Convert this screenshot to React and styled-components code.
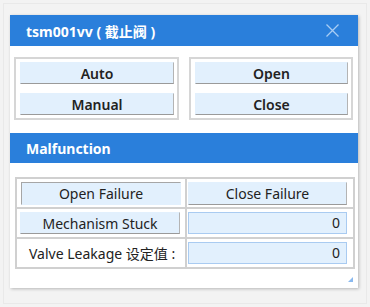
import React from "react"
import styled, { createGlobalStyle } from "styled-components"

const GlobalStyle = createGlobalStyle`
    html, body {
        margin: 0;
        padding: 0;
        background: #f3f3f3;
        font-family: "Noto Sans", "Noto Sans CJK SC", sans-serif;
    }
`

const Frame = styled.div`
    width: 370px;
    height: 307px;
    box-sizing: border-box;
    padding: 15px 12px 0 10px;
    position: relative;
    &:before{
        content: "";
        position: absolute;
        left: 3px;
        top: 3px;
        right: 3px;
        bottom: 3px;
        border: 1px solid #e9e9e9;
        pointer-events: none;
    }
`

const Panel = styled.div`
    position: relative;
    width: 348px;
    height: 273px;
    background: #fff;
    box-shadow: 1px 1px 3px rgba(0, 0, 0, 0.25);
    display: flex;
    flex-direction: column;
`

const Header = styled.div`
    height: ${props => props.h}px;
    background: #2a7fdb;
    color: #fff;
    font-weight: 700;
    font-size: 14px;
    display: flex;
    align-items: center;
    justify-content: space-between;
    padding: 0 19px 0 16px;
    box-sizing: border-box;
    margin-top: ${props => props.top || 0}px;
`

const CloseIcon = styled.svg`
    width: 13px;
    height: 13px;
`

const Groups = styled.div`
    display: flex;
    gap: 10px;
    padding: 11px 5px 0 4px;
`

const GroupBox = styled.div`
    flex: ${props => props.w} 0 0;
    border: 2px solid #d6d6d6;
    padding: 3px 3px 3px 4px;
    display: flex;
    flex-direction: column;
    gap: 9px;
`

const Button = styled.div`
    height: ${props => props.h || 22}px;
    box-sizing: border-box;
    background: #e2f0fd;
    border: 1px solid #e2f0fd;
    ${props => props.inset
        ? "border-top-color: #a6a6a6; border-left-color: #a6a6a6;"
        : "border-bottom-color: #9a9a9a; border-right-color: #b4b4b4;"}
    color: #222;
    font-size: 14px;
    font-weight: ${props => props.strong ? 600 : 400};
    display: flex;
    align-items: center;
    justify-content: center;
    width: ${props => props.width ? props.width + "px" : "auto"};
    margin-left: ${props => props.ml || 0}px;
`

const Table = styled.table`
    margin: 14px 0 0 5px;
    width: 338px;
    border: 1px solid #d0d0d0;
    border-spacing: 0;
    table-layout: fixed;
`

const Cell = styled.td`
    height: 28px;
    padding: 0;
    border: 1px solid #d0d0d0;
    vertical-align: middle;
    width: ${props => props.w}px;
`

const Label = styled.div`
    font-size: 14px;
    color: #222;
    padding-left: 12px;
`

const Input = styled.div`
    height: 22px;
    width: 159px;
    margin-left: 1px;
    box-sizing: border-box;
    background: #e2f0fd;
    border: 1px solid #a9cbf1;
    color: #222;
    font-size: 14px;
    text-align: right;
    padding-right: 6px;
    line-height: 20px;
`

const Grip = styled.div`
    position: absolute;
    right: 5px;
    bottom: 6px;
    width: 0;
    height: 0;
    border-left: 5px solid transparent;
    border-bottom: 5px solid #8ab9ef;
`

export default function App() {
    return (
        <>
            <GlobalStyle />
            <Frame>
                <Panel>
                    <Header h={31}>
                        <span>tsm001vv ( 截止阀 )</span>
                        <CloseIcon viewBox="0 0 13 13">
                            <path d="M0.5 0.5 L12.5 12.5 M12.5 0.5 L0.5 12.5" stroke="#a9cdf4" strokeWidth="1.3" fill="none" />
                        </CloseIcon>
                    </Header>

                    <Groups>
                        <GroupBox w={165}>
                            <Button strong>Auto</Button>
                            <Button strong>Manual</Button>
                        </GroupBox>
                        <GroupBox w={164}>
                            <Button strong>Open</Button>
                            <Button strong>Close</Button>
                        </GroupBox>
                    </Groups>

                    <Header h={30} top={13}>
                        <span>Malfunction</span>
                    </Header>

                    <Table>
                        <tbody>
                            <tr>
                                <Cell w={168}>
                                    <Button inset h={23} width={160} ml={4}>Open Failure</Button>
                                </Cell>
                                <Cell w={166}>
                                    <Button h={23} width={159} ml={1}>Close Failure</Button>
                                </Cell>
                            </tr>
                            <tr>
                                <Cell>
                                    <Button h={22} width={160} ml={3}>Mechanism Stuck</Button>
                                </Cell>
                                <Cell>
                                    <Input>0</Input>
                                </Cell>
                            </tr>
                            <tr>
                                <Cell>
                                    <Label>Valve Leakage 设定值 :</Label>
                                </Cell>
                                <Cell>
                                    <Input>0</Input>
                                </Cell>
                            </tr>
                        </tbody>
                    </Table>

                    <Grip />
                </Panel>
            </Frame>
        </>
    )
}
